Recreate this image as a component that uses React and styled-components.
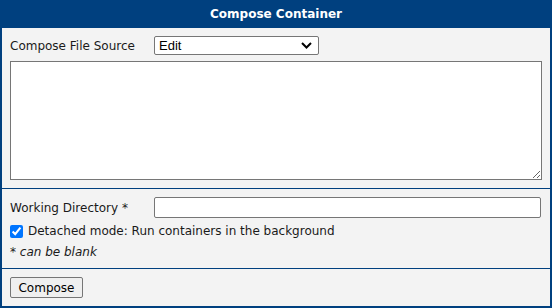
import React from "react";
import styled, { createGlobalStyle } from "styled-components";

const Global = createGlobalStyle`
  html, body { margin: 0; padding: 0; background: #fff; }
  body { font-family: "DejaVu Sans", Verdana, sans-serif; font-size: 12px; color: #1a1a1a; }
  * { box-sizing: border-box; }
`;

const Panel = styled.div`
  width: 552px;
  border: 2px solid #00407f;
  border-top: none;
  background: #f3f3f3;
  display: flex;
  flex-direction: column;
`;

const Header = styled.div`
  height: 28px;
  flex: none;
  background: #00407f;
  color: #fff;
  font-weight: bold;
  font-size: 12px;
  display: flex;
  align-items: center;
  justify-content: center;
  padding-bottom: 1px;
`;

const Section = styled.div`
  flex: none;
  padding: ${(p) => p.$pad || "8px 8px"};
  display: flex;
  flex-direction: column;
  border-bottom: ${(p) => (p.$last ? "none" : "1px solid #00407f")};
`;

const Row = styled.div`
  display: flex;
  align-items: center;
  height: ${(p) => p.$h || "auto"};
  margin-top: ${(p) => p.$mt || "0px"};
`;

const Label = styled.label`
  width: 144px;
  flex: none;
`;

const Select = styled.div`
  width: 165px;
  height: 19px;
  border: 1px solid #767676;
  border-radius: 2px;
  background: #fff;
  display: flex;
  align-items: center;
  justify-content: space-between;
  padding: 0 6px 0 4px;
  font-family: "Liberation Sans", Arial, sans-serif;
  font-size: 13px;
  color: #000;
`;

const TextArea = styled.textarea`
  display: block;
  width: 532px;
  height: 119px;
  margin: 6px 0 0 0;
  border: 1px solid #767676;
  background: #fff;
  resize: vertical;
  border-radius: 0;
`;

const Input = styled.input`
  width: 387px;
  height: 21px;
  border: 1px solid #767676;
  border-radius: 2px;
  background: #fff;
  padding: 0 4px;
`;

const Check = styled.input`
  width: 13px;
  height: 13px;
  margin: 0 5px 0 0;
  accent-color: #0075ff;
`;

const Note = styled.div`
  font-style: italic;
  height: 20px;
  display: flex;
  align-items: center;
`;

const Button = styled.button`
  width: 73px;
  height: 21px;
  border: 1px solid #767676;
  border-radius: 2px;
  background: #efefef;
  font-family: inherit;
  font-size: 12px;
  color: #000;
  padding: 0;
`;

export default function App() {
  return (
    <>
      <Global />
      <Panel>
        <Header>Compose Container</Header>
        <Section $pad="8px 8px 8px 8px">
          <Row $h="19px">
            <Label>Compose File Source</Label>
            <Select>
              <span>Edit</span>
              <svg width="11" height="7" viewBox="0 0 11 7">
                <path d="M1 1 L5.5 5.5 L10 1" fill="none" stroke="#000" strokeWidth="2" />
              </svg>
            </Select>
          </Row>
          <TextArea />
        </Section>
        <Section $pad="8px 8px 6px 8px">
          <Row $h="21px">
            <Label>Working Directory *</Label>
            <Input />
          </Row>
          <Row $h="22px" $mt="2px">
            <Check type="checkbox" defaultChecked />
            <span>Detached mode: Run containers in the background</span>
          </Row>
          <Note>* can be blank</Note>
        </Section>
        <Section $pad="8px 8px 8px 8px" $last>
          <Row>
            <Button>Compose</Button>
          </Row>
        </Section>
      </Panel>
    </>
  );
}
